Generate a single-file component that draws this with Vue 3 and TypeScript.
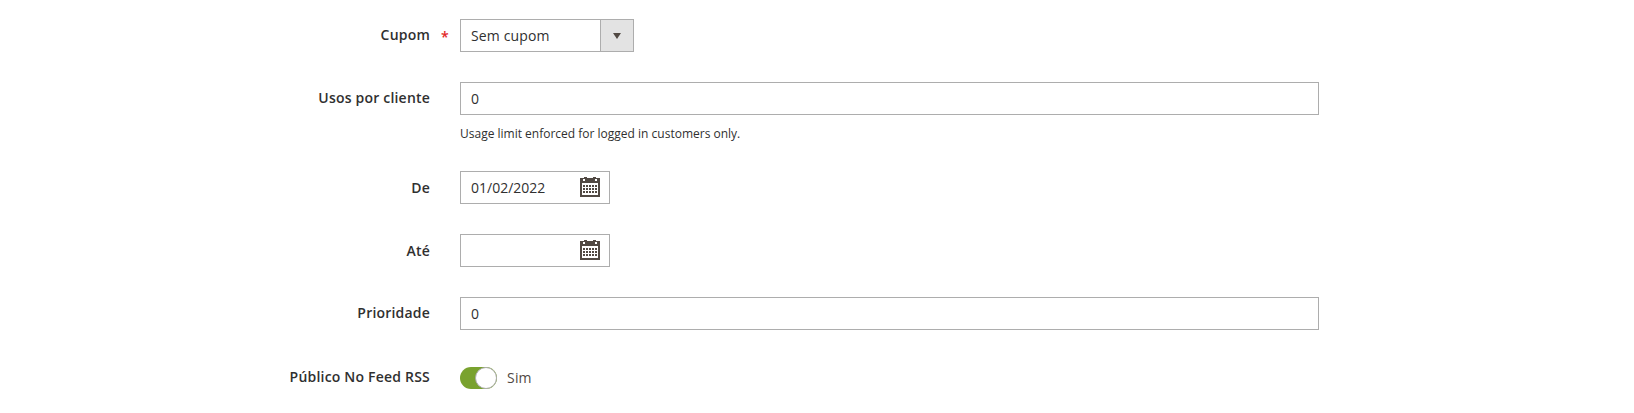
<script setup lang="ts">
const calendarCells = Array.from({ length: 15 }, (_, i) => i)
</script>

<template>
  <form class="form">
    <div class="field">
      <label class="field__label">Cupom<span class="required">*</span></label>
      <div class="select">
        <span class="select__value">Sem cupom</span>
        <span class="select__btn"><i class="arrow"></i></span>
      </div>
    </div>

    <div class="field">
      <label class="field__label">Usos por cliente</label>
      <div class="field__control">
        <input class="input" type="text" value="0" />
        <div class="note">Usage limit enforced for logged in customers only.</div>
      </div>
    </div>

    <div v-for="d in ['De', 'Até']" :key="d" class="field">
      <label class="field__label field__label--date">{{ d }}</label>
      <div class="date">
        <input class="input" type="text" :value="d === 'De' ? '01/02/2022' : ''" />
        <svg class="date__icon" width="20" height="20" viewBox="0 0 20 20">
          <rect x="0" y="1" width="20" height="19" fill="#514943" />
          <rect x="4" y="0" width="3" height="4" fill="#514943" />
          <rect x="13" y="0" width="3" height="4" fill="#514943" />
          <rect x="3" y="2" width="2" height="2" fill="#fff" />
          <rect x="15" y="2" width="2" height="2" fill="#fff" />
          <rect x="2" y="6" width="16" height="12" fill="#fff" />
          <g fill="#514943">
            <rect
              v-for="c in calendarCells"
              :key="c"
              :x="3 + (c % 5) * 3"
              :y="8 + Math.floor(c / 5) * 3"
              width="2"
              height="2"
            />
          </g>
        </svg>
      </div>
    </div>

    <div class="field">
      <label class="field__label">Prioridade</label>
      <div class="field__control">
        <input class="input" type="text" value="0" />
      </div>
    </div>

    <div class="field field--toggle">
      <label class="field__label">Público No Feed RSS</label>
      <div class="toggle">
        <span class="toggle__track"><span class="toggle__knob"></span></span>
        <span class="toggle__text">Sim</span>
      </div>
    </div>
  </form>
</template>

<style>
html,
body {
  margin: 0;
  background: #fff;
}
</style>

<style scoped>
.form {
  display: flex;
  flex-direction: column;
  gap: 30px;
  padding-top: 19px;
  font-family: "Open Sans", sans-serif;
  font-size: 14px;
  color: #303030;
}

.field {
  display: grid;
  grid-template-columns: 430px 859px;
  column-gap: 30px;
}

.field--toggle {
  margin-top: 7px;
}

.field__label {
  position: relative;
  justify-self: end;
  align-self: start;
  font-weight: 600;
  letter-spacing: 0.2px;
  line-height: 33px;
  margin-top: -1px;
}

.field__label--date {
  margin-top: 0;
}

.field--toggle .field__label {
  line-height: 22px;
  margin-top: -1px;
}

.required {
  position: absolute;
  left: calc(100% + 11px);
  top: 2px;
  color: #e22626;
  font-size: 14px;
}

.field__control {
  min-width: 0;
}

.input {
  display: block;
  box-sizing: border-box;
  width: 100%;
  height: 33px;
  padding: 0 10px;
  border: 1px solid #adadad;
  border-radius: 0;
  outline: none;
  background: #fff;
  font: inherit;
  color: #303030;
}

.note {
  margin-top: 11px;
  height: 15px;
  font-size: 12px;
  line-height: 16px;
  color: #303030;
}

.select {
  display: flex;
  box-sizing: border-box;
  width: 174px;
  height: 33px;
  border: 1px solid #adadad;
}

.select__value {
  flex: 1;
  padding-left: 10px;
  letter-spacing: 0.15px;
  line-height: 31px;
}

.select__btn {
  display: flex;
  align-items: center;
  justify-content: center;
  width: 32px;
  border-left: 1px solid #adadad;
  background: #e3e3e3;
}

.arrow {
  width: 0;
  height: 0;
  border-left: 4px solid transparent;
  border-right: 4px solid transparent;
  border-top: 6px solid #514943;
}

.date {
  position: relative;
  width: 150px;
}

.date__icon {
  position: absolute;
  top: 6px;
  right: 10px;
}

.toggle {
  display: flex;
  align-items: center;
  gap: 10px;
  height: 22px;
}

.toggle__track {
  display: flex;
  justify-content: flex-end;
  box-sizing: border-box;
  width: 37px;
  height: 22px;
  border-radius: 12px;
  background: #79a22e;
}

.toggle__knob {
  box-sizing: border-box;
  width: 22px;
  height: 22px;
  border: 1px solid #adadad;
  border-radius: 50%;
  background: #fff;
}

.toggle__text {
  margin-top: -2px;
  letter-spacing: 0.2px;
  color: #514943;
}
</style>
